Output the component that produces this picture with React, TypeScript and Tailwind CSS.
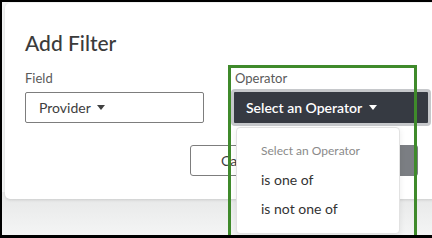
import React from "react";

function Caret({ className = "" }: { className?: string }) {
  return (
    <svg width="8" height="5" viewBox="0 0 8 5" className={className}>
      <path d="M0 0 L8 0 L4 5 Z" fill="currentColor" />
    </svg>
  );
}

export default function App() {
  return (
    <div
      className="relative w-[432px] h-[238px] overflow-hidden bg-[#f3f4f4] border-l-2 border-t-2 border-b-[3px] border-black"
      style={{ fontFamily: "Lato, 'Noto Sans', sans-serif" }}
    >
      <div className="bg-gradient-to-b from-[#e6e7e7] to-[#f4f5f5] absolute left-0 right-0 top-[190px] bottom-0" />
      <div className="relative ml-[3px] mt-[1px] w-[460px] h-[196px] bg-white rounded-[5px] shadow-[0_1px_3px_rgba(0,0,0,0.12)] pl-[20px] pt-[26px]">
        <h2 className="text-[21px] leading-[28px] text-[#3b3b3b] font-medium">Add Filter</h2>
        <div className="flex mt-[12px]">
          <div className="w-[179px]">
            <div className="text-[13px] leading-[18px] text-[#5a5a5a]">Field</div>
            <div className="mt-[5px] h-[31px] border border-[#7d7d7d] rounded-[2px] flex items-center pl-[13px] text-[14px] text-[#404040]">
              Provider
              <Caret className="ml-[6px] text-[#404040]" />
            </div>
          </div>
          <div className="ml-[27px] w-[200px]">
            <div className="ml-[4px] text-[13px] leading-[18px] text-[#5a5a5a]">Operator</div>
            <div className="mt-[2px] h-[37px] border-[3px] border-[#c6c8cb] rounded-[4px] bg-[#363a42] flex items-center pl-[12px] text-[14px] font-semibold text-white">
              Select an Operator
              <Caret className="ml-[7px] text-white" />
            </div>
          </div>
        </div>
        <div className="flex mt-[19px] ml-[165px] gap-[8px]">
          <div className="w-[100px] h-[31px] border border-[#7d7d7d] rounded-[3px] flex items-center pl-[30px] text-[14px] text-[#404040]">
            Cancel
          </div>
          <div className="w-[120px] h-[31px] rounded-[3px] bg-[#7b7e83]" />
        </div>
      </div>

      <div className="absolute left-[234px] top-[125px] w-[164px] h-[107px] bg-white border border-[#e2e2e2] rounded-[4px] shadow-[0_2px_6px_rgba(0,0,0,0.08)] pl-[24px] pt-[15px]">
        <div className="text-[12px] leading-[16px] text-[#8a8a8a]">Select an Operator</div>
        <div className="mt-[12px] text-[14px] leading-[18px] text-[#333]">is one of</div>
        <div className="mt-[11px] text-[14px] leading-[18px] text-[#333]">is not one of</div>
      </div>

      <div className="absolute left-[226px] top-[63px] w-[189px] h-[173px] border-[3px] border-[#3f8a2b]" />
    </div>
  );
}
